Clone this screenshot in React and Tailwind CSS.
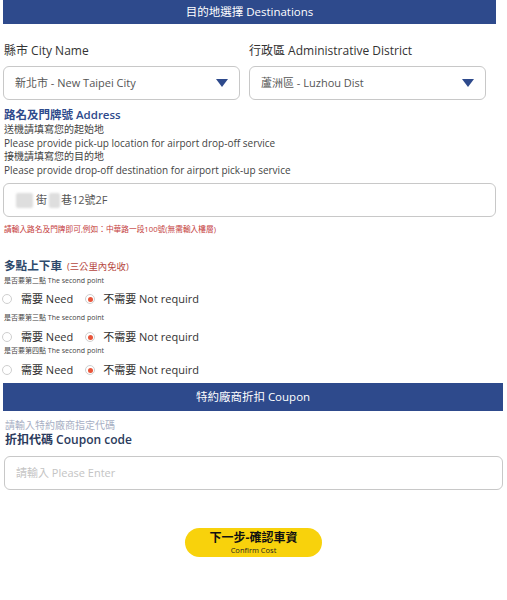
import React from 'react';

const FONT = { fontFamily: '"Open Sans", "Noto Sans CJK TC", sans-serif' };

const Caret = () => (
    <svg width="12" height="8" viewBox="0 0 12 8" className="shrink-0">
        <path d="M0 0 H12 L6 8 Z" fill="#2e4a8c" />
    </svg>
);

const SelectBox = ({ value }) => (
    <div className="flex-1 h-[34px] rounded-[6px] border border-[#c8c8c8] flex items-center justify-between pl-[11px] pr-[11px]">
        <span className="text-[11px] text-[#555]">{value}</span>
        <Caret />
    </div>
);

const Radio = ({ checked }) => (
    <span className="w-[10px] h-[10px] rounded-full border border-[#cfcfcf] flex items-center justify-center shrink-0">
        {checked && <span className="w-[5px] h-[5px] rounded-full bg-[#e8553a]" />}
    </span>
);

const RadioRow = ({ className = '' }) => (
    <div className={`flex items-center h-[18px] text-[11px] text-[#333] ${className}`}>
        <span className="-ml-[1px]"><Radio /></span>
        <span className="ml-[9px]">需要 Need</span>
        <span className="ml-[12px]"><Radio checked /></span>
        <span className="ml-[8px]">不需要 Not requird</span>
    </div>
);

const Hint = ({ children, className = '' }) => (
    <div className={`pl-[1px] text-[7px] leading-[10px] text-[#444] ${className}`}>{children}</div>
);

const App = () => {
    return (
        <div className="w-[507px] h-[600px] bg-white pl-[3px]" style={FONT}>
            <div className="w-[493px]">
                <div className="h-[24px] bg-[#2e4a8c] text-white text-[11.5px] flex items-center justify-center">
                    目的地選擇 Destinations
                </div>

                <div className="flex gap-[9px] mt-[18px] w-[483px]">
                    <div className="flex-1">
                        <div className="text-[12px] leading-[18px] text-[#333] pl-[1px]">縣市 City Name</div>
                        <div className="mt-[6px] flex"><SelectBox value="新北市 - New Taipei City" /></div>
                    </div>
                    <div className="flex-1">
                        <div className="text-[12px] leading-[18px] text-[#333]">行政區 Administrative District</div>
                        <div className="mt-[6px] flex"><SelectBox value="蘆洲區 - Luzhou Dist" /></div>
                    </div>
                </div>

                <div className="mt-[7px] pl-[1px] text-[11.5px] leading-[16px] font-semibold text-[#2e4a8c]">路名及門牌號 Address</div>
                <div className="pl-[1px] text-[10px] leading-[13.5px] text-[#444]">
                    <div>送機請填寫您的起始地</div>
                    <div>Please provide pick-up location for airport drop-off service</div>
                    <div>接機請填寫您的目的地</div>
                    <div>Please provide drop-off destination for airport pick-up service</div>
                </div>

                <div className="mt-[6px] h-[34px] rounded-[6px] border border-[#c8c8c8] flex items-center pl-[12px] text-[11px] text-[#555]">
                    <span className="w-[17px] h-[15px] bg-[#dedede] rounded-[2px] blur-[1px]" />
                    <span className="ml-[3px]">街</span>
                    <span className="ml-[2px] w-[11px] h-[15px] bg-[#dedede] rounded-[2px] blur-[1px]" />
                    <span className="ml-[1px]">巷12號2F</span>
                </div>

                <div className="mt-[7px] pl-[1px] text-[7.7px] leading-[10px] text-[#c43a3a]">
                    請輸入路名及門牌即可,例如：中華路一段100號(無需輸入樓層)
                </div>

                <div className="mt-[24px] pl-[1px] flex items-baseline">
                    <span className="text-[11.6px] leading-[16px] font-semibold text-[#2e4a6c]">多點上下車</span>
                    <span className="ml-[5px] text-[9.4px] text-[#b5463e]">(三公里內免收)</span>
                </div>
                <Hint className="mt-[2px]">是否要第二點 The second point</Hint>
                <RadioRow className="mt-[4px]" />
                <Hint className="mt-[5px]">是否要第三點 The second point</Hint>
                <RadioRow className="mt-[5px]" />
                <Hint>是否要第四點 The second point</Hint>
                <RadioRow className="mt-[5px]" />
            </div>

            <div className="w-[500px]">
                <div className="mt-[4px] h-[28px] bg-[#2e4a8c] text-white text-[11.5px] flex items-center justify-center">
                    特約廠商折扣 Coupon
                </div>
                <div className="mt-[8px] pl-[2px] text-[10px] leading-[12px] text-[#a7afc4]">請輸入特約廠商指定代碼</div>
                <div className="mt-[1px] pl-[2px] text-[12px] leading-[16px] font-semibold text-[#2b3a5c]">折扣代碼 Coupon code</div>
                <div className="mt-[8px] ml-[1px] h-[34px] rounded-[6px] border border-[#c8c8c8] flex items-center pl-[11px] text-[11px] text-[#c4c4c4]">
                    請輸入 Please Enter
                </div>
            </div>

            <div className="flex justify-center mt-[38px] -ml-[3px]">
                <button className="w-[137px] h-[29px] rounded-full bg-[#f8d20c] flex flex-col items-center justify-center gap-[2px]">
                    <span className="text-[12px] leading-[13px] font-bold text-[#111]">下一步-確認車資</span>
                    <span className="text-[7.5px] leading-[9px] text-[#222]">Confirm Cost</span>
                </button>
            </div>
        </div>
    );
};

export default App;
